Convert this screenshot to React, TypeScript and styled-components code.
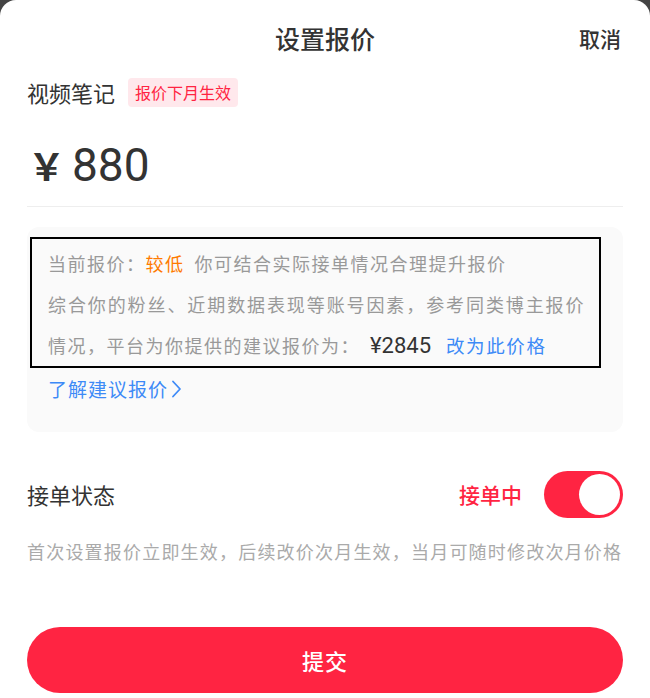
import React, { useState } from "react";
import styled, { createGlobalStyle } from "styled-components";

const GlobalStyle = createGlobalStyle`
  html, body {
    margin: 0;
    padding: 0;
    background: #444;
  }
  body {
    font-family: "Noto Sans CJK SC", "Noto Sans", sans-serif;
  }
`;

const Sheet = styled.div`
  box-sizing: border-box;
  width: 650px;
  height: 698px;
  background: #fff;
  border-radius: 16px 16px 0 0;
  padding: 0 27px;
  overflow: hidden;
`;

const Header = styled.div`
  position: relative;
  height: 76px;
  display: flex;
  align-items: center;
  justify-content: center;
`;

const Title = styled.div`
  font-size: 25px;
  font-weight: 500;
  color: #333;
`;

const Cancel = styled.div`
  position: absolute;
  right: 2px;
  top: 50%;
  transform: translateY(-50%);
  font-size: 21px;
  font-weight: 500;
  color: #333;
`;

const TypeRow = styled.div`
  display: flex;
  align-items: center;
  gap: 13px;
  height: 32px;
`;

const TypeName = styled.div`
  font-size: 22px;
  color: #333;
`;

const Badge = styled.span`
  font-size: 16px;
  color: #ff2442;
  background: #ffe8ec;
  border-radius: 4px;
  padding: 2px 7px;
  line-height: 25px;
`;

const PriceRow = styled.div`
  box-sizing: border-box;
  display: flex;
  align-items: center;
  height: 90px;
  padding: 6px 0 0 1px;
  margin-top: 9px;
  border-bottom: 1px solid #eee;
`;

const Yen = styled.span`
  font-size: 37px;
  font-weight: 700;
  color: #333;
  margin-right: 7px;
`;

const Amount = styled.span`
  font-family: "Roboto", "Noto Sans", sans-serif;
  font-size: 46px;
  color: #333;
`;

const AdviceCard = styled.div`
  margin-top: 20px;
  background: #fafafa;
  border-radius: 12px;
  padding: 10px 0 22px 3px;
`;

const AdviceBox = styled.div`
  box-sizing: border-box;
  width: 571px;
  border: 2px solid #000;
  padding: 4px 14px 0 16px;
  font-size: 18px;
  line-height: 41px;
  letter-spacing: 1.5px;
  color: #999;
`;

const Paragraph = styled.div`
  text-align: justify;
`;

const Level = styled.span`
  color: #ff7a00;
  margin-right: 10px;
`;

const Suggest = styled.span`
  color: #333;
  font-family: "Roboto", "Noto Sans", sans-serif;
  font-size: 22px;
  line-height: 1;
  margin: 0 15px 0 10px;
  letter-spacing: 0;
`;

const BlueLink = styled.span`
  color: #3d8af7;
  font-size: 18.5px;
  line-height: 1;
  letter-spacing: 1.6px;
`;

const LearnMore = styled.div`
  display: flex;
  align-items: center;
  padding-left: 18px;
  font-size: 19px;
  line-height: 42px;
  letter-spacing: 1px;
  color: #3d8af7;
  svg {
    margin-left: 2px;
  }
`;

const StatusRow = styled.div`
  display: flex;
  align-items: center;
  justify-content: space-between;
  margin-top: 38px;
  height: 48px;
`;

const StatusLabel = styled.div`
  font-size: 22px;
  color: #333;
`;

const StatusRight = styled.div`
  display: flex;
  align-items: center;
  gap: 22px;
`;

const StatusText = styled.div<{ $on: boolean }>`
  font-size: 21px;
  font-weight: 500;
  color: ${(p) => (p.$on ? "#ff2442" : "#999")};
`;

const Toggle = styled.button<{ $on: boolean }>`
  position: relative;
  width: 79px;
  height: 47px;
  border: none;
  padding: 0;
  border-radius: 24px;
  background: ${(p) => (p.$on ? "#ff2442" : "#e5e5e5")};
  cursor: pointer;
  &::after {
    content: "";
    position: absolute;
    top: 3px;
    left: ${(p) => (p.$on ? "35px" : "3px")};
    width: 41px;
    height: 41px;
    border-radius: 50%;
    background: #fff;
  }
`;

const Note = styled.div`
  margin-top: 17px;
  font-size: 18px;
  letter-spacing: 1.2px;
  color: #aaa;
  line-height: 32px;
  white-space: nowrap;
`;

const Submit = styled.button`
  display: block;
  width: 100%;
  height: 66px;
  margin-top: 60px;
  border: none;
  border-radius: 33px;
  background: #ff2442;
  color: #fff;
  font-family: inherit;
  font-size: 22px;
  font-weight: 500;
  letter-spacing: 1px;
`;

export default function App() {
  const [on, setOn] = useState(true);
  return (
    <>
      <GlobalStyle />
      <Sheet>
        <Header>
          <Title>设置报价</Title>
          <Cancel>取消</Cancel>
        </Header>
        <TypeRow>
          <TypeName>视频笔记</TypeName>
          <Badge>报价下月生效</Badge>
        </TypeRow>
        <PriceRow>
          <Yen>￥</Yen>
          <Amount>880</Amount>
        </PriceRow>
        <AdviceCard>
          <AdviceBox>
            <div>
              当前报价：<Level>较低</Level>你可结合实际接单情况合理提升报价
            </div>
            <Paragraph>
              <span>综合你的粉丝、近期数据表现等账号因素，参考同类博主报价</span>
              <span>情况，平台为你提供的建议报价为：</span>
              <Suggest>¥2845</Suggest>
              <BlueLink>改为此价格</BlueLink>
            </Paragraph>
          </AdviceBox>
          <LearnMore>
            了解建议报价
            <svg width="12" height="20" viewBox="0 0 12 20" fill="none">
              <path d="M3 2.5l7 7.5-7 7.5" stroke="#3d8af7" strokeWidth="1.8" strokeLinecap="round" strokeLinejoin="round" />
            </svg>
          </LearnMore>
        </AdviceCard>
        <StatusRow>
          <StatusLabel>接单状态</StatusLabel>
          <StatusRight>
            <StatusText $on={on}>{on ? "接单中" : "暂停接单"}</StatusText>
            <Toggle $on={on} onClick={() => setOn(!on)} aria-label="接单状态" />
          </StatusRight>
        </StatusRow>
        <Note>首次设置报价立即生效，后续改价次月生效，当月可随时修改次月价格</Note>
        <Submit>提交</Submit>
      </Sheet>
    </>
  );
}
